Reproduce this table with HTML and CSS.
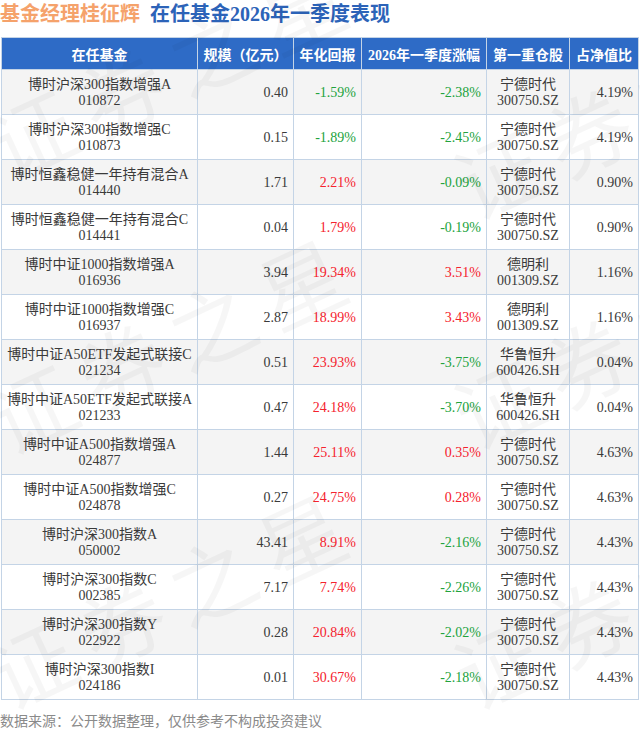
FILE: index.html
```html
<!DOCTYPE html>
<html lang="zh">
<head>
<meta charset="utf-8">
<link rel="stylesheet" href="styles.css">
</head>
<body>
<div class="page">
  <h1 class="title"><span class="t-orange">基金经理桂征辉</span><span class="t-blue">在任基金2026年一季度表现</span></h1>
  <table class="funds">
    <colgroup>
      <col class="c1"><col class="c2"><col class="c3"><col class="c4"><col class="c5"><col class="c6">
    </colgroup>
    <thead>
      <tr><th>在任基金</th><th>规模（亿元）</th><th>年化回报</th><th>2026年一季度涨幅</th><th>第一重仓股</th><th>占净值比</th></tr>
    </thead>
    <tbody>
      <tr><td class="name">博时沪深300指数增强A<br>010872</td><td class="num">0.40</td><td class="num down">-1.59%</td><td class="num down">-2.38%</td><td class="stk">宁德时代<br>300750.SZ</td><td class="num">4.19%</td></tr>
      <tr><td class="name">博时沪深300指数增强C<br>010873</td><td class="num">0.15</td><td class="num down">-1.89%</td><td class="num down">-2.45%</td><td class="stk">宁德时代<br>300750.SZ</td><td class="num">4.19%</td></tr>
      <tr><td class="name">博时恒鑫稳健一年持有混合A<br>014440</td><td class="num">1.71</td><td class="num up">2.21%</td><td class="num down">-0.09%</td><td class="stk">宁德时代<br>300750.SZ</td><td class="num">0.90%</td></tr>
      <tr><td class="name">博时恒鑫稳健一年持有混合C<br>014441</td><td class="num">0.04</td><td class="num up">1.79%</td><td class="num down">-0.19%</td><td class="stk">宁德时代<br>300750.SZ</td><td class="num">0.90%</td></tr>
      <tr><td class="name">博时中证1000指数增强A<br>016936</td><td class="num">3.94</td><td class="num up">19.34%</td><td class="num up">3.51%</td><td class="stk">德明利<br>001309.SZ</td><td class="num">1.16%</td></tr>
      <tr><td class="name">博时中证1000指数增强C<br>016937</td><td class="num">2.87</td><td class="num up">18.99%</td><td class="num up">3.43%</td><td class="stk">德明利<br>001309.SZ</td><td class="num">1.16%</td></tr>
      <tr><td class="name">博时中证A50ETF发起式联接C<br>021234</td><td class="num">0.51</td><td class="num up">23.93%</td><td class="num down">-3.75%</td><td class="stk">华鲁恒升<br>600426.SH</td><td class="num">0.04%</td></tr>
      <tr><td class="name">博时中证A50ETF发起式联接A<br>021233</td><td class="num">0.47</td><td class="num up">24.18%</td><td class="num down">-3.70%</td><td class="stk">华鲁恒升<br>600426.SH</td><td class="num">0.04%</td></tr>
      <tr><td class="name">博时中证A500指数增强A<br>024877</td><td class="num">1.44</td><td class="num up">25.11%</td><td class="num up">0.35%</td><td class="stk">宁德时代<br>300750.SZ</td><td class="num">4.63%</td></tr>
      <tr><td class="name">博时中证A500指数增强C<br>024878</td><td class="num">0.27</td><td class="num up">24.75%</td><td class="num up">0.28%</td><td class="stk">宁德时代<br>300750.SZ</td><td class="num">4.63%</td></tr>
      <tr><td class="name">博时沪深300指数A<br>050002</td><td class="num">43.41</td><td class="num up">8.91%</td><td class="num down">-2.16%</td><td class="stk">宁德时代<br>300750.SZ</td><td class="num">4.43%</td></tr>
      <tr><td class="name">博时沪深300指数C<br>002385</td><td class="num">7.17</td><td class="num up">7.74%</td><td class="num down">-2.26%</td><td class="stk">宁德时代<br>300750.SZ</td><td class="num">4.43%</td></tr>
      <tr><td class="name">博时沪深300指数Y<br>022922</td><td class="num">0.28</td><td class="num up">20.84%</td><td class="num down">-2.02%</td><td class="stk">宁德时代<br>300750.SZ</td><td class="num">4.43%</td></tr>
      <tr><td class="name">博时沪深300指数I<br>024186</td><td class="num">0.01</td><td class="num up">30.67%</td><td class="num down">-2.18%</td><td class="stk">宁德时代<br>300750.SZ</td><td class="num">4.43%</td></tr>
    </tbody>
  </table>
  <p class="source">数据来源：公开数据整理，仅供参考不构成投资建议</p>
  <div class="watermark wm1">证券之星</div>
  <div class="watermark wm2">证券之星</div>
  <div class="watermark wm3">证券之星</div>
  <div class="watermark wm4">证券之星</div>
  <div class="watermark wm5">证券之星</div>
  <div class="watermark wm6">证券之星</div>
</div>
</body>
</html>
```
FILE: styles.css
```css
html, body {
  margin: 0;
  padding: 0;
  background: #ffffff;
}
.page {
  position: relative;
  width: 640px;
  height: 730px;
  overflow: hidden;
  font-family: "Liberation Serif", "Noto Sans CJK SC", serif;
  color: #3a3a3a;
}
.title {
  margin: 0;
  height: 37px;
  font-size: 20px;
  line-height: 28px;
  font-weight: bold;
  white-space: nowrap;
}
.t-orange {
  color: #f5a26b;
  margin-right: 10px;
}
.t-blue {
  color: #2c63b8;
}
.funds {
  margin-left: 1px;
  width: 637px;
  border-collapse: collapse;
  table-layout: fixed;
  font-size: 14px;
}
.c1 { width: 196px; }
.c2 { width: 96px; }
.c3 { width: 68px; }
.c4 { width: 125px; }
.c5 { width: 83px; }
.c6 { width: 69px; }
.funds th, .funds td {
  border: 1px solid #c4d4e6;
  padding: 0 5px;
}
.funds th {
  height: 31px;
  background: #2e6bc6;
  color: #ffffff;
  font-weight: bold;
  text-align: center;
  white-space: nowrap;
  padding: 0 2px;
}
.funds td {
  height: 42px;
  line-height: 16px;
  padding-top: 2px;
  padding-bottom: 0;
}
.funds tbody tr:nth-child(odd) td {
  background: #f4f4f4;
}
.name, .stk {
  text-align: center;
  white-space: nowrap;
}
.name { padding: 2px 2px 0; }
.num {
  text-align: right;
}
.up { color: #f5222d; }
.down { color: #22a33c; }
.source {
  margin: 10px 0 0 0;
  font-size: 14px;
  line-height: 20px;
  color: #8a8a8a;
  font-family: "Noto Sans CJK SC", sans-serif;
}
.watermark {
  position: absolute;
  font-family: "Noto Sans CJK SC", sans-serif;
  font-size: 85px;
  line-height: 1;
  letter-spacing: 14px;
  color: rgba(0, 0, 0, 0.035);
  white-space: nowrap;
  transform: rotate(-25deg);
  transform-origin: left top;
  pointer-events: none;
}
.wm1 { left: -26px; top: 110px; }
.wm2 { left: -26px; top: 385px; }
.wm3 { left: -26px; top: 640px; }
.wm4 { left: 440px; top: 150px; }
.wm5 { left: 440px; top: 380px; }
.wm6 { left: 440px; top: 640px; }
```
